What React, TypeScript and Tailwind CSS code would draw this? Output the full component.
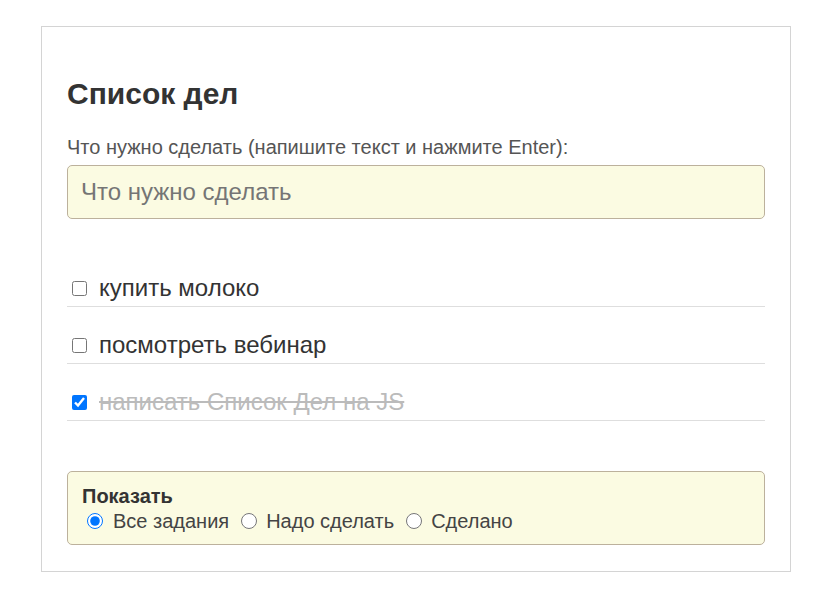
import React from "react";

const items = [
  { text: "купить молоко", done: false },
  { text: "посмотреть вебинар", done: false },
  { text: "написать Список Дел на JS", done: true },
];

export default function App() {
  return (
    <div className="min-h-[609px] bg-white pt-[26px] font-['Liberation_Sans',Arial,sans-serif]">
      <div className="ml-[41px] w-[750px] border border-[#d4d4d4] px-[25px] pt-[25px] pb-[26px]">
        <h2 className="mt-[25px] mb-[25px] text-[30px] leading-[34px] font-bold text-[#333]">Список дел</h2>
        <label className="block text-[20px] leading-[23px] text-[#555]">
          Что нужно сделать (напишите текст и нажмите Enter):
        </label>
        <input
          type="text"
          placeholder="Что нужно сделать"
          className="mt-[6px] block h-[54px] w-full rounded-[5px] border border-[#bcb19c] bg-[#fbfbe2] px-[13px] text-[24px] text-[#333] placeholder:text-[#757575] outline-none"
        />
        <ul className="mt-[31px]">
          {items.map((it) => (
            <li key={it.text} className="flex h-[57px] items-end border-b border-[#dedede] pl-[5px] pb-[4px]">
              <div className="flex h-[28px] items-center">
                <input type="checkbox" defaultChecked={it.done} className="m-0 h-[15px] w-[15px]" />
                <span
                  className={
                    "ml-[12px] text-[24px] leading-[28px] " +
                    (it.done ? "text-[#bbb] line-through" : "text-[#333]")
                  }
                >
                  {it.text}
                </span>
              </div>
            </li>
          ))}
        </ul>
        <div className="mt-[50px] h-[74px] rounded-[5px] border border-[#bcb19c] bg-[#fbfbe2] px-[14px] pt-[13px]">
          <div className="text-[20px] leading-[23px] font-bold text-[#333]">Показать</div>
          <div className="flex h-[26px] items-center text-[20px] leading-[26px] text-[#444]">
            <label className="flex items-center">
              <input type="radio" name="f" defaultChecked className="m-0 ml-[5px] mr-[10px] h-[16px] w-[16px]" />
              Все задания
            </label>
            <label className="flex items-center">
              <input type="radio" name="f" className="m-0 ml-[12px] mr-[9px] h-[16px] w-[16px]" />
              Надо сделать
            </label>
            <label className="flex items-center">
              <input type="radio" name="f" className="m-0 ml-[12px] mr-[9px] h-[16px] w-[16px]" />
              Сделано
            </label>
          </div>
        </div>
      </div>
    </div>
  );
}
